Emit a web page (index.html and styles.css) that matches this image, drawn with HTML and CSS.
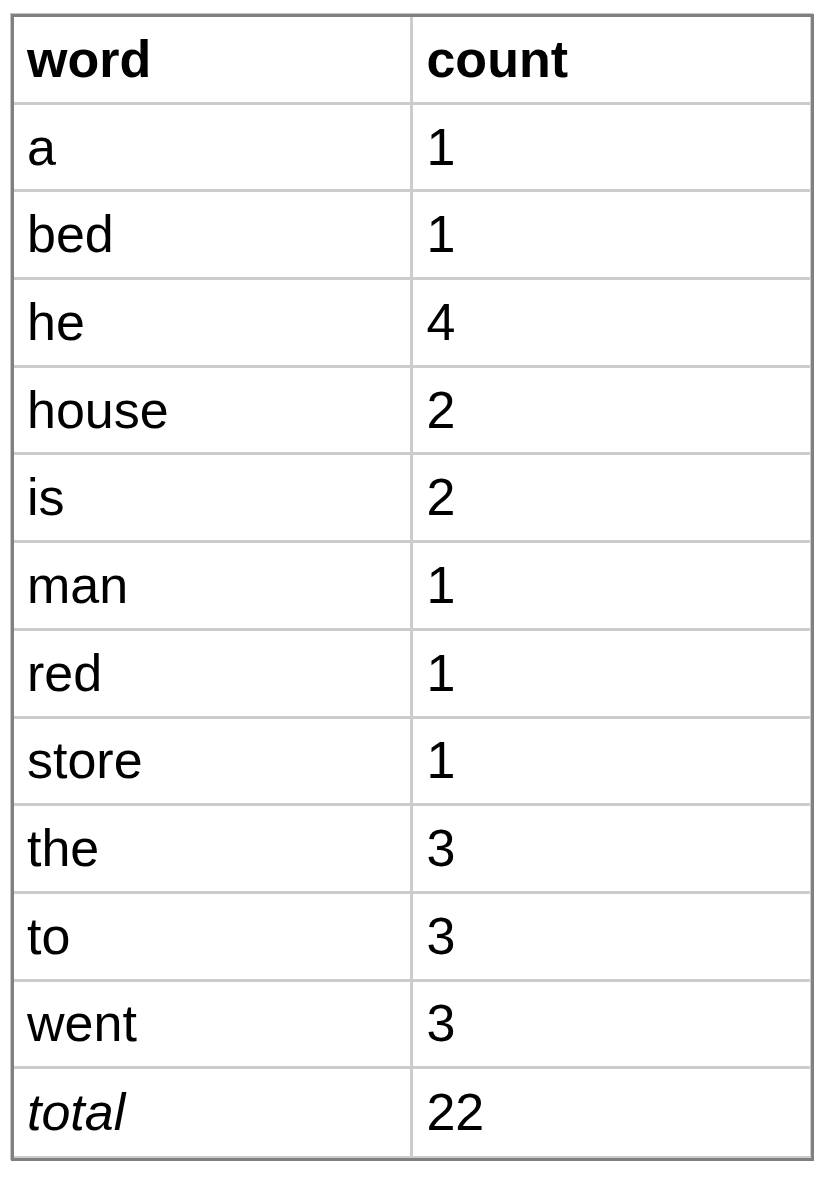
FILE: index.html
```html
<!DOCTYPE html>
<html>
<head>
<meta charset="utf-8">
<link rel="stylesheet" href="styles.css">
</head>
<body>
<table class="counts">
  <thead>
    <tr><th>word</th><th>count</th></tr>
  </thead>
  <tbody>
    <tr><td>a</td><td>1</td></tr>
    <tr><td>bed</td><td>1</td></tr>
    <tr><td>he</td><td>4</td></tr>
    <tr><td>house</td><td>2</td></tr>
    <tr><td>is</td><td>2</td></tr>
    <tr><td>man</td><td>1</td></tr>
    <tr><td>red</td><td>1</td></tr>
    <tr><td>store</td><td>1</td></tr>
    <tr><td>the</td><td>3</td></tr>
    <tr><td>to</td><td>3</td></tr>
    <tr><td>went</td><td>3</td></tr>
    <tr class="total"><td class="label">total</td><td>22</td></tr>
  </tbody>
</table>
</body>
</html>
```

FILE: styles.css
```css
html, body {
  margin: 0;
  padding: 0;
  background: #ffffff;
}
body {
  padding: 14px 0 0 11px;
  font-family: "Liberation Sans", Arial, sans-serif;
  color: #000;
}
.counts {
  width: 803px;
  border: 3px solid #808080;
  border-spacing: 0;
  border-collapse: separate;
  box-shadow: -1px -1px 0 0 #c4c4c4;
  table-layout: fixed;
}
.counts th,
.counts td {
  width: 50%;
  height: 83.7px;
  padding: 0 0 1px 13px;
  font-size: 52px;
  text-align: left;
  vertical-align: middle;
  border-bottom: 3px solid #cccccc;
  border-right: 3px solid #cccccc;
}
.counts th {
  font-weight: bold;
}
.counts tr > :last-child {
  border-right: 1px solid #cccccc;
}
.counts tr.total td {
  height: 85.7px;
  border-bottom: 2px solid #cccccc;
}
.counts .label {
  font-style: italic;
}
```
